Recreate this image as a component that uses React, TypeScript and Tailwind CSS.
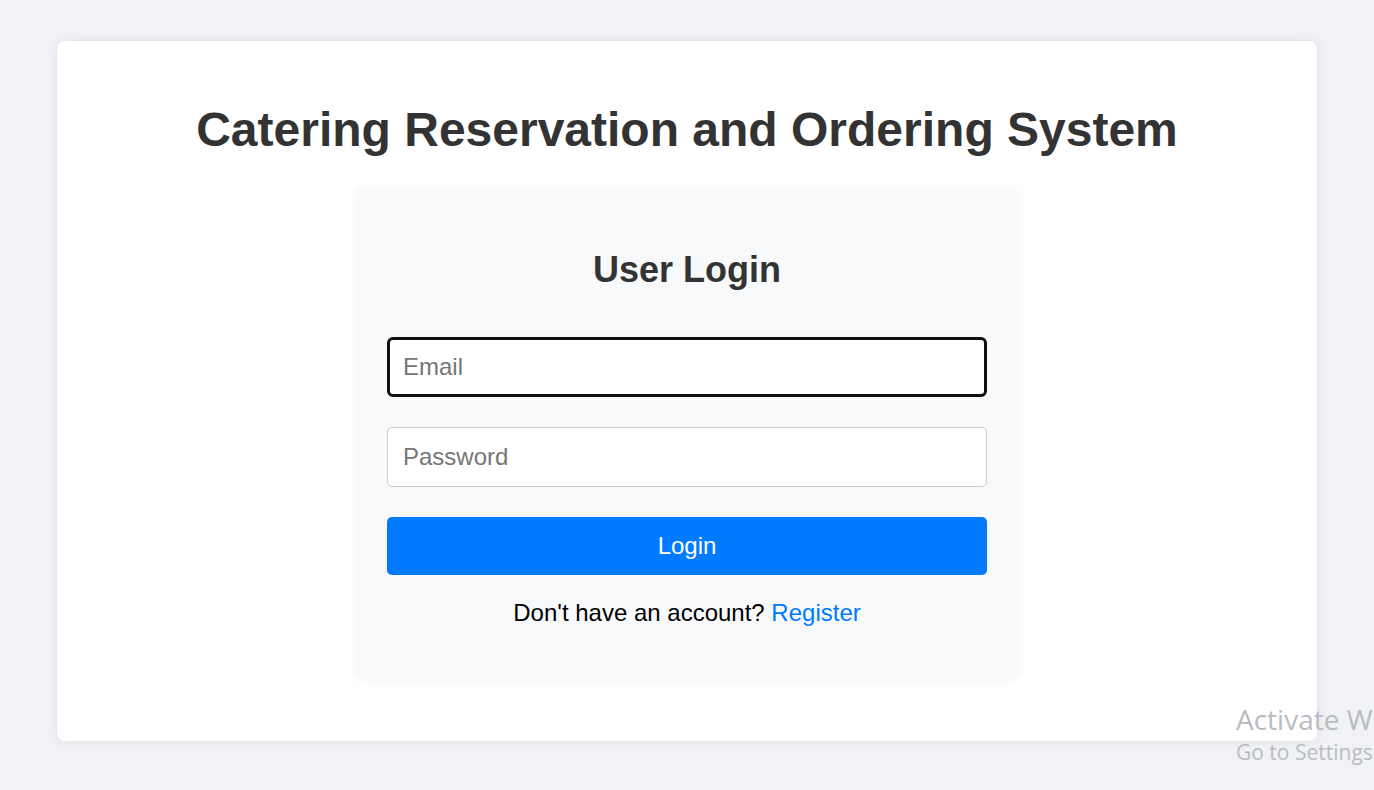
import React from 'react';

export default function App() {
  return (
    <div className="relative min-h-screen w-full overflow-hidden bg-[#f0f2f5] font-['Liberation_Sans',Arial,sans-serif]">
      <div className="ml-[57px] pt-[41px]">
        <div className="flex h-[700px] w-[1260px] flex-col items-center rounded-lg bg-white pt-[61px] shadow-[0_0_12px_rgba(0,0,0,0.08)]">
          <h1 className="text-[48px] font-bold leading-[55px] text-[#333]">
            Catering Reservation and Ordering System
          </h1>

          <div className="mt-[32px] flex w-[662px] flex-col items-center rounded-[10px] bg-[#f8f9fa] px-[31px] pb-[54px] pt-[60px] shadow-[0_0_10px_rgba(0,0,0,0.06)]">
            <h2 className="text-[36px] font-bold leading-[41px] text-[#333]">User Login</h2>

            <div className="relative mt-[47px] w-full">
              <input
                type="email"
                placeholder="Email"
                autoFocus
                className="h-[60px] w-full rounded-[6px] border-[3px] border-[#101010] bg-white px-[13px] text-[24px] text-[#333] outline-none placeholder:text-[#767676]"
              />
            </div>

            <input
              type="password"
              placeholder="Password"
              className="mt-[30px] h-[60px] w-full rounded-[5px] border border-[#ccc] bg-white px-[15px] text-[24px] text-[#333] outline-none placeholder:text-[#767676]"
            />

            <button className="mt-[30px] h-[58px] w-full rounded-[5px] bg-[#007bff] text-[24px] text-white">
              Login
            </button>

            <p className="mt-[24px] text-[24px] leading-[28px] text-black">
              Don't have an account? <a href="#" className="text-[#007bff]">Register</a>
            </p>
          </div>
        </div>
      </div>

      <div className="absolute left-[1236px] top-[700px] whitespace-nowrap font-['Open_Sans',sans-serif] text-[#b9bcc0]">
        <div className="text-[28px] leading-[38px]">Activate Windows</div>
        <div className="text-[21px] leading-[28px]">Go to Settings to activate Windows.</div>
      </div>
    </div>
  );
}
